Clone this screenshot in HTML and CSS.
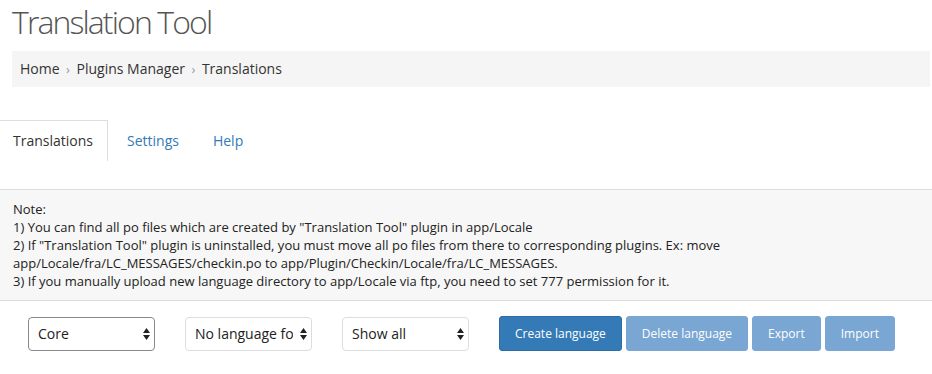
FILE: index.html
```html
<!DOCTYPE html>
<html>
<head>
<meta charset="utf-8">
<title>Translation Tool</title>
<link rel="stylesheet" href="styles.css">
</head>
<body>
	<div class="head">
		<h1>Translation Tool</h1>
		<div class="crumbs">
			<a href="#">Home</a><span class="sep">&rsaquo;</span><a href="#">Plugins Manager</a><span class="sep">&rsaquo;</span><span>Translations</span>
		</div>
	</div>

	<ul class="tabs">
		<li class="active"><a href="#">Translations</a></li>
		<li><a href="#">Settings</a></li>
		<li><a href="#">Help</a></li>
	</ul>

	<div class="note">
		Note:<br>
		1) You can find all po files which are created by "Translation Tool" plugin in app/Locale<br>
		2) If "Translation Tool" plugin is uninstalled, you must move all po files from there to corresponding plugins. Ex: move app/Locale/fra/LC_MESSAGES/checkin.po to app/Plugin/Checkin/Locale/fra/LC_MESSAGES.<br>
		3) If you manually upload new language directory to app/Locale via ftp, you need to set 777 permission for it.
	</div>

	<div class="toolbar">
		<div class="pick focus">
			<select><option>Core</option></select>
			<svg class="arrows" width="7" height="12" viewBox="0 0 7 12"><path d="M3.5 0L7 5H0z M3.5 12L0 7h7z" fill="#222"/></svg>
		</div>
		<div class="pick">
			<select><option>No language found</option></select>
			<svg class="arrows" width="7" height="12" viewBox="0 0 7 12"><path d="M3.5 0L7 5H0z M3.5 12L0 7h7z" fill="#222"/></svg>
		</div>
		<div class="pick">
			<select><option>Show all</option></select>
			<svg class="arrows" width="7" height="12" viewBox="0 0 7 12"><path d="M3.5 0L7 5H0z M3.5 12L0 7h7z" fill="#222"/></svg>
		</div>
		<div class="buttons">
			<button class="btn">Create language</button>
			<button class="btn off">Delete language</button>
			<button class="btn off">Export</button>
			<button class="btn off">Import</button>
		</div>
	</div>
</body>
</html>
```

FILE: styles.css
```css
body {margin:0; font-family:"Open Sans","Liberation Sans",sans-serif; font-size:14px; color:#333; background:#fff; overflow:hidden;}
a {text-decoration:none;}

.head {padding:0 2px 0 12px;}
h1 {margin:0; font-size:32px; line-height:44px; letter-spacing:-1.9px; font-weight:300; color:#555;}
.crumbs {margin-top:7px; padding:8px 8px; line-height:20px; background:#f5f5f5; color:#333;}
.crumbs a {color:#333;}
.crumbs .sep {color:#999; padding:0 6.5px; font-size:13px;}

.tabs {list-style:none; margin:33px 0 0 -1px; padding:0; display:flex; line-height:20px;}
.tabs li {margin-right:2px;}
.tabs li.active {margin-right:3px;}
.tabs li a {display:block; padding:10px 15px; color:#337ab7; border:1px solid transparent; border-bottom:none;}
.tabs li.active a {padding:10px 14px 10px 13px; color:#333; border-color:#ddd;}

.note {margin-top:28px; padding:10px 13px; background:#f7f7f7; border-top:1px solid #ddd; border-bottom:1px solid #ddd; font-size:13px; line-height:18px; color:#222;}

.toolbar {display:flex; align-items:center; padding:15px 0 0 28px;}
.pick {position:relative; width:127px; height:34px; margin-right:30px;}
.pick select {appearance:none; -webkit-appearance:none; width:100%; height:100%; margin:0; padding:0 18px 0 9px; font-family:inherit; font-size:14px; color:#222; background:#fff; border:1px solid #ddd; border-radius:4px;}
.pick.focus select {border-color:#888;}
.pick .arrows {position:absolute; right:5px; top:11px; pointer-events:none;}
.buttons {display:flex; gap:4px;}
.btn {height:35px; padding:0 15px; font-family:inherit; font-size:12px; color:#fff; background:#337ab7; border:1px solid #2e6da4; border-radius:3px;}
.btn.off {background:#79a6d3; border-color:#79a6d3;}
```
